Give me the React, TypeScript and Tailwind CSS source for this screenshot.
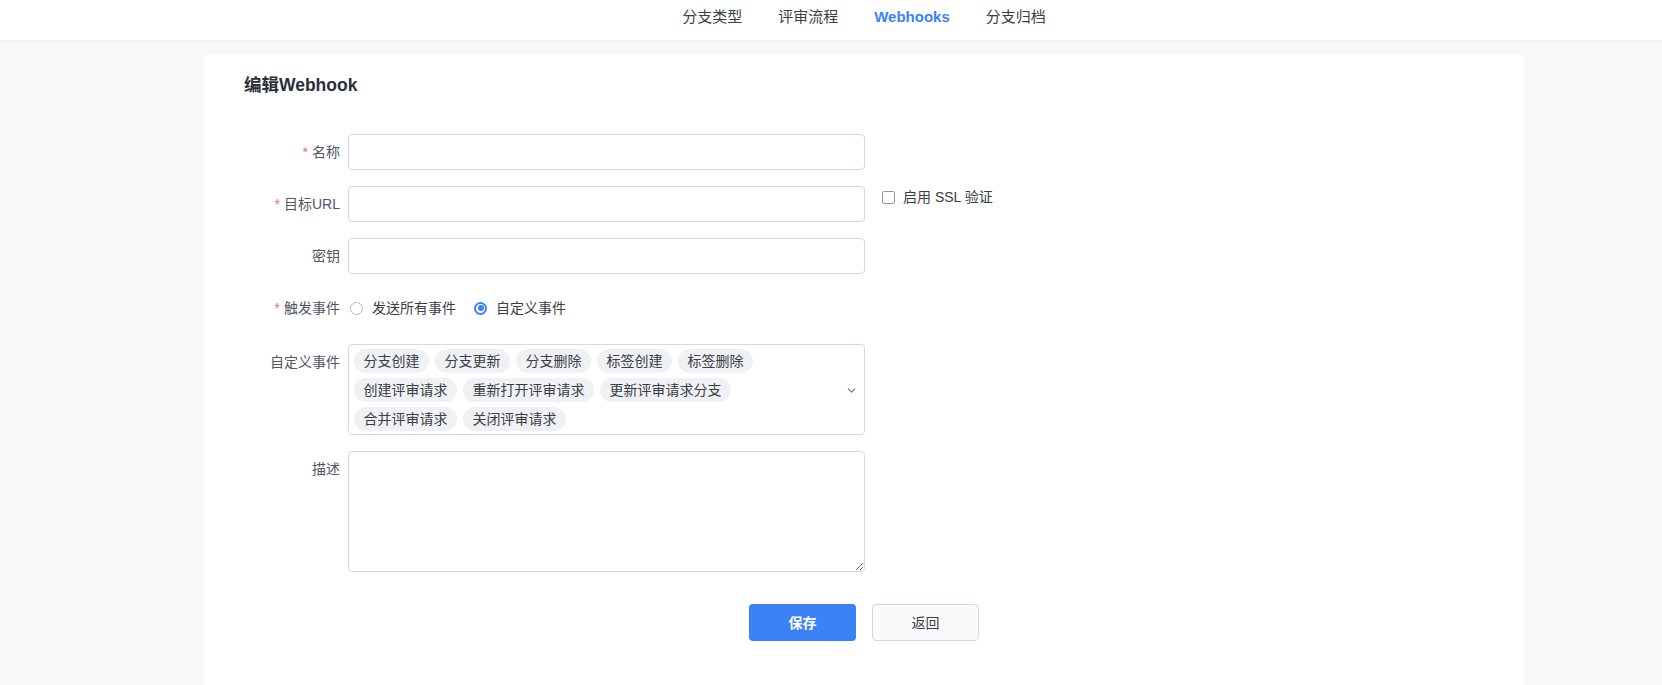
import { ChevronDown } from "lucide-react";

const tabs = ["分支类型", "评审流程", "Webhooks", "分支归档"];

const events = [
  "分支创建",
  "分支更新",
  "分支删除",
  "标签创建",
  "标签删除",
  "创建评审请求",
  "重新打开评审请求",
  "更新评审请求分支",
  "合并评审请求",
  "关闭评审请求",
];

function FieldLabel({ text, required }: { text: string; required?: boolean }) {
  return (
    <div className="flex h-9 w-[104px] shrink-0 items-center justify-end pr-2 text-sm text-[#50555f]">
      {required && <span className="mr-1 text-[#f56c6c]">*</span>}
      {text}
    </div>
  );
}

function TextInput() {
  return (
    <input
      type="text"
      className="h-9 w-[517px] rounded-[4px] border border-[#d5d8e2] bg-white px-3 text-sm outline-none"
    />
  );
}

export default function App() {
  return (
    <div className="h-[685px] overflow-hidden bg-[#f7f8fa] font-['Liberation_Sans','Noto_Sans_CJK_SC',sans-serif] text-[#333]">
      <header className="h-10 bg-white shadow-[0_1px_4px_rgba(0,0,0,0.06)]">
        <nav className="ml-[204px] flex w-[1320px] justify-center gap-9 pt-[6px]">
          {tabs.map((tab) => (
            <span
              key={tab}
              className={
                tab === "Webhooks"
                  ? "text-[15px] leading-[22px] font-bold text-[#3b82f6]"
                  : "text-[15px] leading-[22px] text-[#3a3d44]"
              }
            >
              {tab}
            </span>
          ))}
        </nav>
      </header>

      <main className="ml-[204px] mt-[14px] w-[1320px] rounded-t-md bg-white px-10 pt-[19px] pb-[60px]">
        <h2 className="text-[17.5px] leading-6 font-bold text-[#2a2f3a]">编辑Webhook</h2>

        <div className="mt-[37px] flex flex-col gap-4">
          <div className="flex">
            <FieldLabel text="名称" required />
            <TextInput />
          </div>

          <div className="flex items-start">
            <FieldLabel text="目标URL" required />
            <TextInput />
            <label className="ml-[17px] flex h-[22px] items-center gap-2 text-sm text-[#3a3d44]">
              <span className="h-[13px] w-[13px] rounded-[2px] border border-[#9298a3] bg-white" />
              启用 SSL 验证
            </label>
          </div>

          <div className="flex">
            <FieldLabel text="密钥" />
            <TextInput />
          </div>

          <div className="flex h-[38px] items-start">
            <FieldLabel text="触发事件" required />
            <div className="flex h-9 items-center pl-[2px] text-sm text-[#3a3d44]">
              <span className="h-[13px] w-[13px] rounded-full border border-[#b6bac3] bg-white" />
              <span className="ml-[9px]">发送所有事件</span>
              <span className="ml-[18px] flex h-[13px] w-[13px] items-center justify-center rounded-full border-2 border-[#3b82f6] bg-white">
                <span className="h-[6px] w-[6px] rounded-full bg-[#3b82f6]" />
              </span>
              <span className="ml-[9px]">自定义事件</span>
            </div>
          </div>

          <div className="flex items-start">
            <FieldLabel text="自定义事件" />
            <div className="flex w-[517px] rounded-[4px] border border-[#d5d8e2] bg-white pt-1 pb-[3px] pl-[5px]">
              <div className="flex w-[470px] flex-wrap gap-x-[6px] gap-y-[5px]">
                {events.map((ev) => (
                  <span
                    key={ev}
                    className="h-6 rounded-full bg-[#eff1f4] px-[9.5px] text-sm leading-6 text-[#3a3d44]"
                  >
                    {ev}
                  </span>
                ))}
              </div>
              <div className="flex flex-1 items-center justify-end pr-[6px]">
                <ChevronDown className="h-[13px] w-[13px] text-[#6b7280]" strokeWidth={2} />
              </div>
            </div>
          </div>

          <div className="flex items-start">
            <FieldLabel text="描述" />
            <textarea className="h-[121px] w-[517px] rounded-[4px] border border-[#d5d8e2] bg-white px-3 py-2 text-sm outline-none" />
          </div>
        </div>

        <div className="mt-[32px] flex justify-center gap-4">
          <button className="h-[37px] w-[107px] rounded-[4px] bg-[#3b82f6] text-sm font-bold text-white">
            保存
          </button>
          <button className="h-[37px] w-[107px] rounded-[4px] border border-[#d5d8e2] bg-[#f9fafc] text-sm text-[#3a3d44]">
            返回
          </button>
        </div>
      </main>
    </div>
  );
}
